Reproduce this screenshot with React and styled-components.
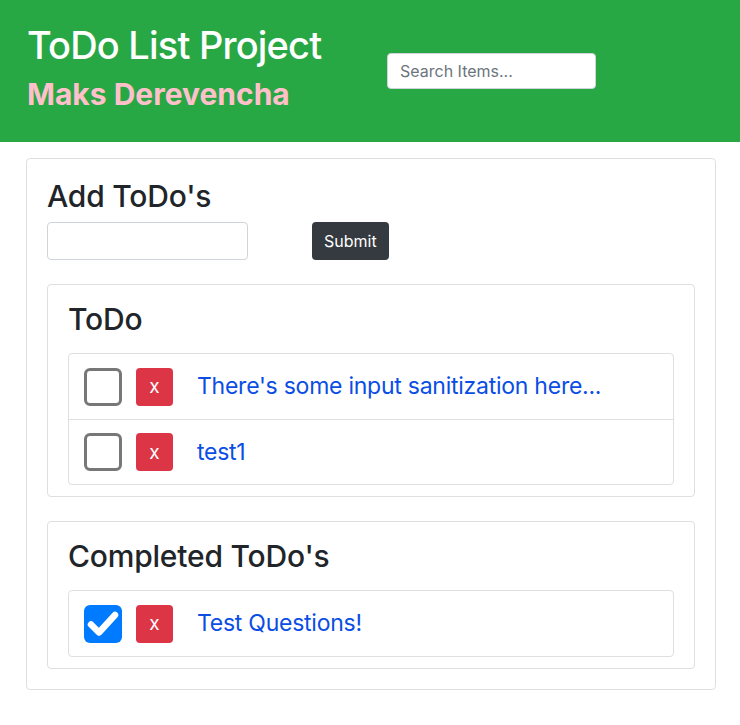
import React from 'react';
import { useState } from 'react';
import styled, { createGlobalStyle } from 'styled-components';

const GlobalStyle = createGlobalStyle`
  * {
    box-sizing: border-box;
  }

  body {
    margin: 0;
    background: #ffffff;
    font-family: Inter, "Noto Sans", "Liberation Sans", sans-serif;
    color: #212529;
  }
`;

const StyledHeader = styled.header`
  background: #28a745;
  height: 142px;
  display: flex;
  align-items: flex-start;
  padding: 23px 27px 0;
`;

const StyledTitles = styled.div`
  width: 360px;
  display: flex;
  flex-direction: column;
  gap: 7px;
`;

const StyledTitle = styled.h1`
  margin: 0;
  font-size: 38px;
  font-weight: 500;
  line-height: 1.2;
  letter-spacing: -0.8px;
  color: #ffffff;
`;

const StyledAuthor = styled.h2`
  margin: 0;
  font-size: 30px;
  font-weight: 700;
  line-height: 1.2;
  color: #ffc0cb;
`;

const StyledSearch = styled.input`
  margin-top: 30px;
  width: 209px;
  height: 36px;
  padding: 0 12px;
  border: 1px solid #ced4da;
  border-radius: 4px;
  font-family: inherit;
  font-size: 16px;
  color: #495057;

  &::placeholder {
    color: #6c757d;
  }
`;

const StyledMain = styled.main`
  padding: 16px 24px 36px 26px;
`;

const StyledCard = styled.section`
  border: 1px solid #dfdfdf;
  border-radius: 4px;
  padding: ${({ $outer }) => ($outer ? '19px 20px 20px' : '16px 20px 11px')};
  display: flex;
  flex-direction: column;
  gap: ${({ $outer }) => ($outer ? '24px' : '0')};
`;

const StyledCardTitle = styled.h2`
  margin: 0 0 ${({ $gap }) => $gap}px;
  font-size: 30px;
  font-weight: 500;
  line-height: 1.2;
  letter-spacing: -0.2px;
  color: #212529;
`;

const StyledForm = styled.form`
  display: flex;
  align-items: center;
  gap: 64px;
`;

const StyledTextInput = styled.input`
  width: 201px;
  height: 38px;
  border: 1px solid #ced4da;
  border-radius: 4px;
  padding: 0 12px;
  font-family: inherit;
  font-size: 16px;
`;

const StyledSubmit = styled.button`
  height: 38px;
  padding: 0 12px;
  border: none;
  border-radius: 4px;
  background: #343a40;
  color: #ffffff;
  font-family: inherit;
  font-size: 16px;
`;

const StyledList = styled.ul`
  list-style: none;
  margin: 0;
  padding: 0;
  border: 1px solid #dfdfdf;
  border-radius: 4px;
`;

const StyledItem = styled.li`
  display: flex;
  align-items: center;
  padding: 12px 15px;
  min-height: 65px;

  & + & {
    border-top: 1px solid #dfdfdf;
  }
`;

const StyledCheck = styled.button`
  width: 38px;
  height: 38px;
  padding: 0;
  border-radius: 6px;
  border: ${({ $checked }) => ($checked ? 'none' : '3px solid #777777')};
  background: ${({ $checked }) => ($checked ? '#007bff' : '#ffffff')};
  display: flex;
  align-items: center;
  justify-content: center;
  cursor: pointer;
`;

const StyledDelete = styled.button`
  width: 37px;
  height: 38px;
  margin-left: 14px;
  padding: 0;
  border: none;
  border-radius: 4px;
  background: #dc3545;
  color: #ffffff;
  font-family: inherit;
  font-size: 19px;
  line-height: 1;
`;

const StyledText = styled.span`
  margin-left: 24px;
  font-size: 23px;
  line-height: 1.5;
  letter-spacing: -0.25px;
  color: #0a4ee4;
`;

const CheckMark = () => (
  <svg width="32" height="28" viewBox="0 0 32 28">
    <path
      d="M4 14.5 L12 22.5 L28 5"
      fill="none"
      stroke="#ffffff"
      strokeWidth="6.5"
      strokeLinecap="round"
      strokeLinejoin="round"
    />
  </svg>
);

const TodoItem = ({ item, onToggle, onDelete }) => (
  <StyledItem>
    <StyledCheck
      $checked={item.done}
      aria-label="toggle"
      onClick={() => onToggle(item.id)}
    >
      {item.done && <CheckMark />}
    </StyledCheck>
    <StyledDelete onClick={() => onDelete(item.id)}>x</StyledDelete>
    <StyledText>{item.text}</StyledText>
  </StyledItem>
);

const App = () => {
  const [items, setItems] = useState([
    { id: 1, text: "There's some input sanitization here...", done: false },
    { id: 2, text: 'test1', done: false },
    { id: 3, text: 'Test Questions!', done: true },
  ]);
  const [search, setSearch] = useState('');
  const [draft, setDraft] = useState('');

  const handleToggle = id => {
    setItems(prev =>
      prev.map(item => (item.id === id ? { ...item, done: !item.done } : item))
    );
  };

  const handleDelete = id => {
    setItems(prev => prev.filter(item => item.id !== id));
  };

  const handleSubmit = event => {
    event.preventDefault();
    if (!draft.trim()) return;
    setItems(prev => [...prev, { id: Date.now(), text: draft, done: false }]);
    setDraft('');
  };

  const visible = items.filter(item =>
    item.text.toLowerCase().includes(search.toLowerCase())
  );
  const todo = visible.filter(item => !item.done);
  const done = visible.filter(item => item.done);

  return (
    <>
      <GlobalStyle />
      <StyledHeader>
        <StyledTitles>
          <StyledTitle>ToDo List Project</StyledTitle>
          <StyledAuthor>Maks Derevencha</StyledAuthor>
        </StyledTitles>
        <StyledSearch
          type="text"
          placeholder="Search Items..."
          value={search}
          onChange={e => setSearch(e.target.value)}
        />
      </StyledHeader>
      <StyledMain>
        <StyledCard $outer>
          <div>
            <StyledCardTitle $gap={8}>Add ToDo's</StyledCardTitle>
            <StyledForm onSubmit={handleSubmit}>
              <StyledTextInput
                type="text"
                value={draft}
                onChange={e => setDraft(e.target.value)}
              />
              <StyledSubmit type="submit">Submit</StyledSubmit>
            </StyledForm>
          </div>
          <StyledCard>
            <StyledCardTitle $gap={16}>ToDo</StyledCardTitle>
            <StyledList>
              {todo.map(item => (
                <TodoItem
                  key={item.id}
                  item={item}
                  onToggle={handleToggle}
                  onDelete={handleDelete}
                />
              ))}
            </StyledList>
          </StyledCard>
          <StyledCard>
            <StyledCardTitle $gap={16}>Completed ToDo's</StyledCardTitle>
            <StyledList>
              {done.map(item => (
                <TodoItem
                  key={item.id}
                  item={item}
                  onToggle={handleToggle}
                  onDelete={handleDelete}
                />
              ))}
            </StyledList>
          </StyledCard>
        </StyledCard>
      </StyledMain>
    </>
  );
};

export default App;
